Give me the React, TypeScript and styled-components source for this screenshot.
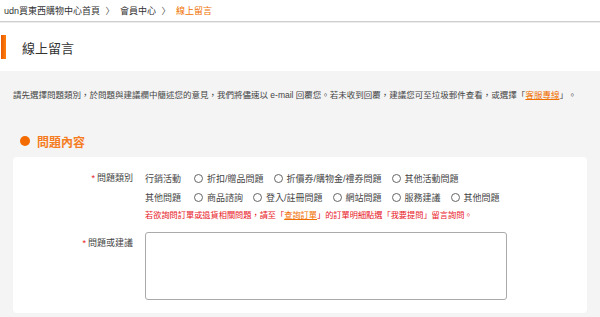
import React from 'react';
import styled, {createGlobalStyle} from 'styled-components';

const colors = {
    text: '#333333',
    orange: '#f57c1f',
    link: '#f07000',
    red: '#e8141e',
    grayBg: '#f4f4f4',
    line: '#cfcfcf',
    radio: '#666666',
};

const GlobalStyle = createGlobalStyle`
    html, body {
        margin: 0;
        padding: 0;
        background: #ffffff;
    }
    body {
        font-family: "Liberation Sans", "Noto Sans CJK TC", sans-serif;
        color: ${colors.text};
    }
`;

const Page = styled.div`
    width: 600px;
    min-height: 317px;
    display: flex;
    flex-direction: column;
`;

const Breadcrumb = styled.nav`
    height: 21px;
    display: flex;
    align-items: center;
    padding-left: 4px;
    font-size: 9px;
    border-bottom: 1px solid ${colors.line};
    box-shadow: 0 1px 0 #ececec;
`;

const Crumb = styled.span<{ $active?: boolean }>`
    color: ${props => props.$active ? colors.link : colors.text};
`;

const Sep = styled.span`
    display: inline-block;
    width: 20px;
    text-align: center;
    color: #555;
`;

const TitleBar = styled.div`
    height: 48px;
    display: flex;
    align-items: center;
    margin-top: 1px;
`;

const TitleMark = styled.span`
    width: 5px;
    height: 24px;
    margin-left: 1px;
    background: linear-gradient(to right, #e85a00, #ff7f10);
`;

const Title = styled.h1`
    margin: 0 0 0 16px;
    font-size: 13px;
    font-weight: normal;
    color: #333;
`;

const Content = styled.main`
    flex: 1;
    background: ${colors.grayBg};
    padding: 16px 13px 4px 13px;
`;

const Intro = styled.p`
    margin: 0;
    font-size: 8.5px;
    line-height: 16px;
    color: #444;
    white-space: nowrap;
`;

const Link = styled.a`
    color: ${colors.link};
    text-decoration: underline;
`;

const SectionHeading = styled.h2`
    margin: 30px 0 8px 7px;
    display: flex;
    align-items: center;
    gap: 7px;
    height: 16px;
    font-size: 12px;
    font-weight: 600;
    color: ${colors.orange};
`;

const Dot = styled.span`
    width: 10px;
    height: 10px;
    border-radius: 50%;
    background: #f26a00;
`;

const Card = styled.section`
    background: #ffffff;
    border-radius: 4px;
    padding: 12px 0 13px 0;
    display: grid;
    grid-template-columns: 120px 1fr;
    column-gap: 12px;
    row-gap: 8px;
`;

const Label = styled.div<{ $top: number }>`
    text-align: right;
    font-size: 9px;
    line-height: 19px;
    padding-top: ${props => props.$top}px;
    color: #444;
`;

const Star = styled.span`
    color: ${colors.red};
    margin-right: 2px;
`;

const Field = styled.div`
    display: flex;
    flex-direction: column;
`;

const OptionRow = styled.div`
    display: flex;
    align-items: center;
    height: 19px;
    font-size: 9px;
    color: #444;
`;

const GroupName = styled.span`
    width: 49px;
`;

const Option = styled.label`
    display: flex;
    align-items: center;
    margin-right: 10px;
`;

const Radio = styled.span`
    width: 7px;
    height: 7px;
    border: 1px solid ${colors.radio};
    border-radius: 50%;
    margin-right: 4px;
    box-sizing: content-box;
`;

const Notice = styled.div`
    font-size: 8.2px;
    line-height: 17px;
    color: ${colors.red};
`;

const TextBox = styled.textarea`
    width: 362px;
    height: 68px;
    box-sizing: border-box;
    border: 1px solid #aaaaaa;
    border-radius: 3px;
    resize: none;
    margin: 0;
    padding: 4px;
    font-family: inherit;
`;

const rows = [
    {group: '行銷活動', items: ['折扣/贈品問題', '折價券/購物金/禮券問題', '其他活動問題']},
    {group: '其他問題', items: ['商品諮詢', '登入/註冊問題', '網站問題', '服務建議', '其他問題']},
];

const App: React.FC = () => {
    return (
        <Page>
            <GlobalStyle/>
            <Breadcrumb>
                <Crumb>udn買東西購物中心首頁</Crumb>
                <Sep>〉</Sep>
                <Crumb>會員中心</Crumb>
                <Sep>〉</Sep>
                <Crumb $active>線上留言</Crumb>
            </Breadcrumb>

            <TitleBar>
                <TitleMark/>
                <Title>線上留言</Title>
            </TitleBar>

            <Content>
                <Intro>
                    請先選擇問題類別，於問題與建議欄中簡述您的意見，我們將儘速以 e-mail 回覆您。若未收到回覆，建議您可至垃圾郵件查看，或選擇「<Link>客服專線</Link>」。
                </Intro>

                <SectionHeading>
                    <Dot/>
                    問題內容
                </SectionHeading>

                <Card>
                    <Label $top={0}><Star>*</Star>問題類別</Label>
                    <Field>
                        {rows.map(row => (
                            <OptionRow key={row.group}>
                                <GroupName>{row.group}</GroupName>
                                {row.items.map(item => (
                                    <Option key={item}>
                                        <Radio/>
                                        {item}
                                    </Option>
                                ))}
                            </OptionRow>
                        ))}
                        <Notice>
                            若欲詢問訂單或退貨相關問題，請至「<Link>查詢訂單</Link>」的訂單明細點選「我要提問」留言詢問。
                        </Notice>
                    </Field>

                    <Label $top={2}><Star>*</Star>問題或建議</Label>
                    <TextBox/>
                </Card>
            </Content>
        </Page>
    );
};

export default App;
